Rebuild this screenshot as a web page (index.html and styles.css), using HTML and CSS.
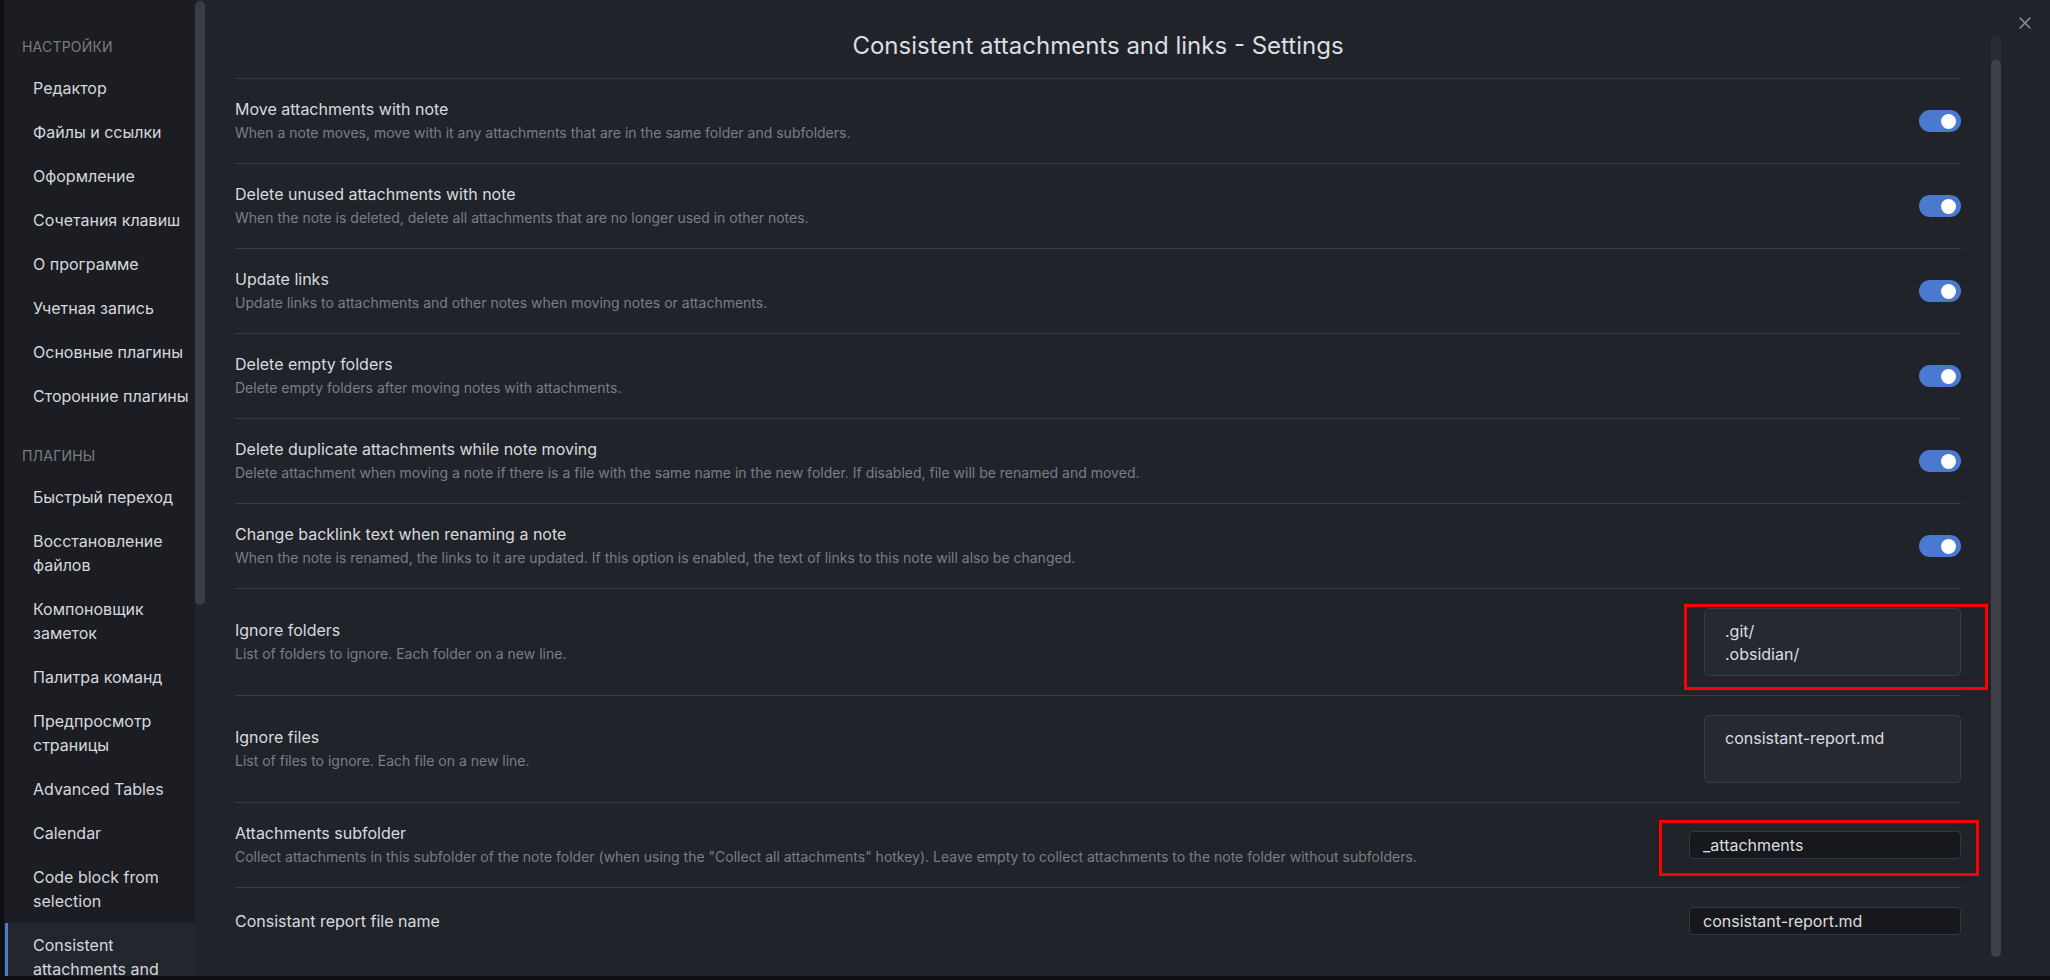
FILE: index.html
```html
<!DOCTYPE html>
<html lang="ru">
<head>
<meta charset="utf-8">
<title>Consistent attachments and links - Settings</title>
<link rel="stylesheet" href="styles.css">
</head>
<body>
<div class="modal">
  <aside class="sidebar">
    <nav class="nav">
      <div class="nav-header">НАСТРОЙКИ</div>
      <div class="nav-item">Редактор</div>
      <div class="nav-item">Файлы и ссылки</div>
      <div class="nav-item">Оформление</div>
      <div class="nav-item">Сочетания клавиш</div>
      <div class="nav-item">О программе</div>
      <div class="nav-item">Учетная запись</div>
      <div class="nav-item">Основные плагины</div>
      <div class="nav-item">Сторонние плагины</div>
      <div class="nav-header second">ПЛАГИНЫ</div>
      <div class="nav-item">Быстрый переход</div>
      <div class="nav-item">Восстановление файлов</div>
      <div class="nav-item">Компоновщик заметок</div>
      <div class="nav-item">Палитра команд</div>
      <div class="nav-item">Предпросмотр страницы</div>
      <div class="nav-item">Advanced Tables</div>
      <div class="nav-item">Calendar</div>
      <div class="nav-item">Code block from selection</div>
      <div class="nav-item active">Consistent attachments and links</div>
    </nav>
  </aside>
  <div class="side-scroll"><div class="side-thumb"></div></div>
  <main class="main">
    <section class="content">
      <h2 class="title">Consistent attachments and links - Settings</h2>

      <div class="setting">
        <div class="info">
          <div class="name">Move attachments with note</div>
          <div class="desc">When a note moves, move with it any attachments that are in the same folder and subfolders.</div>
        </div>
        <div class="control"><div class="toggle"><div class="knob"></div></div></div>
      </div>

      <div class="setting">
        <div class="info">
          <div class="name">Delete unused attachments with note</div>
          <div class="desc">When the note is deleted, delete all attachments that are no longer used in other notes.</div>
        </div>
        <div class="control"><div class="toggle"><div class="knob"></div></div></div>
      </div>

      <div class="setting">
        <div class="info">
          <div class="name">Update links</div>
          <div class="desc">Update links to attachments and other notes when moving notes or attachments.</div>
        </div>
        <div class="control"><div class="toggle"><div class="knob"></div></div></div>
      </div>

      <div class="setting">
        <div class="info">
          <div class="name">Delete empty folders</div>
          <div class="desc">Delete empty folders after moving notes with attachments.</div>
        </div>
        <div class="control"><div class="toggle"><div class="knob"></div></div></div>
      </div>

      <div class="setting">
        <div class="info">
          <div class="name">Delete duplicate attachments while note moving</div>
          <div class="desc">Delete attachment when moving a note if there is a file with the same name in the new folder. If disabled, file will be renamed and moved.</div>
        </div>
        <div class="control"><div class="toggle"><div class="knob"></div></div></div>
      </div>

      <div class="setting">
        <div class="info">
          <div class="name">Change backlink text when renaming a note</div>
          <div class="desc">When the note is renamed, the links to it are updated. If this option is enabled, the text of links to this note will also be changed.</div>
        </div>
        <div class="control"><div class="toggle"><div class="knob"></div></div></div>
      </div>

      <div class="setting">
        <div class="info">
          <div class="name">Ignore folders</div>
          <div class="desc">List of folders to ignore. Each folder on a new line.</div>
        </div>
        <div class="control">
          <textarea class="area" readonly>.git/
.obsidian/</textarea>
          <div class="mark mark-folders"></div>
        </div>
      </div>

      <div class="setting">
        <div class="info">
          <div class="name">Ignore files</div>
          <div class="desc">List of files to ignore. Each file on a new line.</div>
        </div>
        <div class="control">
          <textarea class="area" readonly>consistant-report.md</textarea>
        </div>
      </div>

      <div class="setting">
        <div class="info">
          <div class="name">Attachments subfolder</div>
          <div class="desc">Collect attachments in this subfolder of the note folder (when using the "Collect all attachments" hotkey). Leave empty to collect attachments to the note folder without subfolders.</div>
        </div>
        <div class="control">
          <input class="field" type="text" value="_attachments" readonly>
          <div class="mark mark-sub"></div>
        </div>
      </div>

      <div class="setting">
        <div class="info">
          <div class="name">Consistant report file name</div>
        </div>
        <div class="control">
          <input class="field" type="text" value="consistant-report.md" readonly>
        </div>
      </div>
    </section>
    <div class="main-scroll"><div class="main-thumb"></div></div>
  </main>
  <button class="close" aria-label="Close">
    <svg viewBox="0 0 14 14" width="14" height="14"><path d="M2 2 L12 12 M12 2 L2 12" stroke="#8b8d92" stroke-width="1.6" stroke-linecap="round" fill="none"/></svg>
  </button>
</div>
</body>
</html>
```

FILE: styles.css
```css
* {
  box-sizing: border-box;
}

html,
body {
  margin: 0;
  height: 100%;
}

body {
  background: #0e0f12;
  font-family: Inter, "Noto Sans", sans-serif;
  overflow: hidden;
}

.modal {
  position: relative;
  display: flex;
  height: 976px;
  margin-left: 4px;
  background: #20232a;
}

/* ---------- sidebar ---------- */
.sidebar {
  width: 191px;
  flex-shrink: 0;
  background: #1b1d23;
  padding: 37px 0 0 1px;
  overflow: hidden;
}

.nav-header {
  font-size: 14px;
  line-height: 20px;
  color: #7a7c81;
  padding-left: 17px;
  margin-bottom: 9px;
  letter-spacing: 0.2px;
}

.nav-header.second {
  margin-top: 28px;
}

.nav-item {
  font-size: 16px;
  line-height: 24px;
  padding: 10px 0 10px 25px;
  border-left: 3px solid transparent;
  color: #d6d8dc;
}

.nav-item.active {
  background: #23262d;
  border-left-color: #4f7ad0;
}

.side-scroll {
  width: 10px;
  flex-shrink: 0;
  padding-top: 1px;
}

.side-thumb {
  height: 604px;
  background: #393c43;
  border-radius: 5px;
}

/* ---------- main ---------- */
.main {
  flex: 1;
  display: flex;
  min-width: 0;
}

.content {
  flex: 1;
  min-width: 0;
  padding: 0 30px;
}

.title {
  margin: 0 0 17px;
  padding-top: 31px;
  text-align: center;
  font-size: 24px;
  line-height: 30px;
  font-weight: 400;
  color: #dcdde0;
}

.setting {
  display: flex;
  align-items: center;
  gap: 30px;
  border-top: 1px solid #393c44;
  padding: 19px 0;
}

.info {
  flex: 1;
  min-width: 0;
}

.name {
  font-size: 16px;
  line-height: 23px;
  color: #d9dadd;
}

.desc {
  font-size: 14px;
  line-height: 23px;
  color: #7b7e84;
}

.control {
  position: relative;
  flex-shrink: 0;
  display: flex;
}

.toggle {
  width: 42px;
  height: 22px;
  border-radius: 11px;
  background: #4a79cf;
  display: flex;
  align-items: center;
  justify-content: flex-end;
  padding-right: 5px;
}

.knob {
  width: 15px;
  height: 15px;
  border-radius: 50%;
  background: #ffffff;
}

.area {
  display: block;
  width: 257px;
  height: 68px;
  margin: 0;
  padding: 11px 20px;
  background: #262930;
  border: 1px solid #3a3d45;
  border-radius: 5px;
  font-family: Inter, "Noto Sans", sans-serif;
  font-size: 16px;
  line-height: 23px;
  color: #dcdde0;
  resize: none;
  overflow: hidden;
  outline: none;
}

.field {
  display: block;
  width: 272px;
  height: 28px;
  margin: 0;
  padding: 0 13px;
  background: #16181c;
  border: 1px solid #34373e;
  border-radius: 4px;
  font-family: Inter, "Noto Sans", sans-serif;
  font-size: 16px;
  color: #dcdde0;
  outline: none;
}

/* red annotation frames drawn over the controls */
.mark {
  position: absolute;
  border: 3px solid #f00;
  pointer-events: none;
}

.mark-folders {
  left: -20px;
  right: -27px;
  top: -4px;
  bottom: -14px;
}

.mark-sub {
  left: -30px;
  right: -18px;
  top: -11px;
  bottom: -17px;
}

.main-scroll {
  width: 10px;
  flex-shrink: 0;
  margin: 35px 49px 19px 0;
  background: #292c33;
  border-radius: 5px;
  display: flex;
  flex-direction: column;
}

.main-thumb {
  flex: 1;
  margin-top: 25px;
  background: #3e4148;
  border-radius: 5px;
}

.close {
  position: absolute;
  top: 16px;
  right: 18px;
  width: 14px;
  height: 14px;
  padding: 0;
  border: none;
  background: none;
  display: flex;
}
```
